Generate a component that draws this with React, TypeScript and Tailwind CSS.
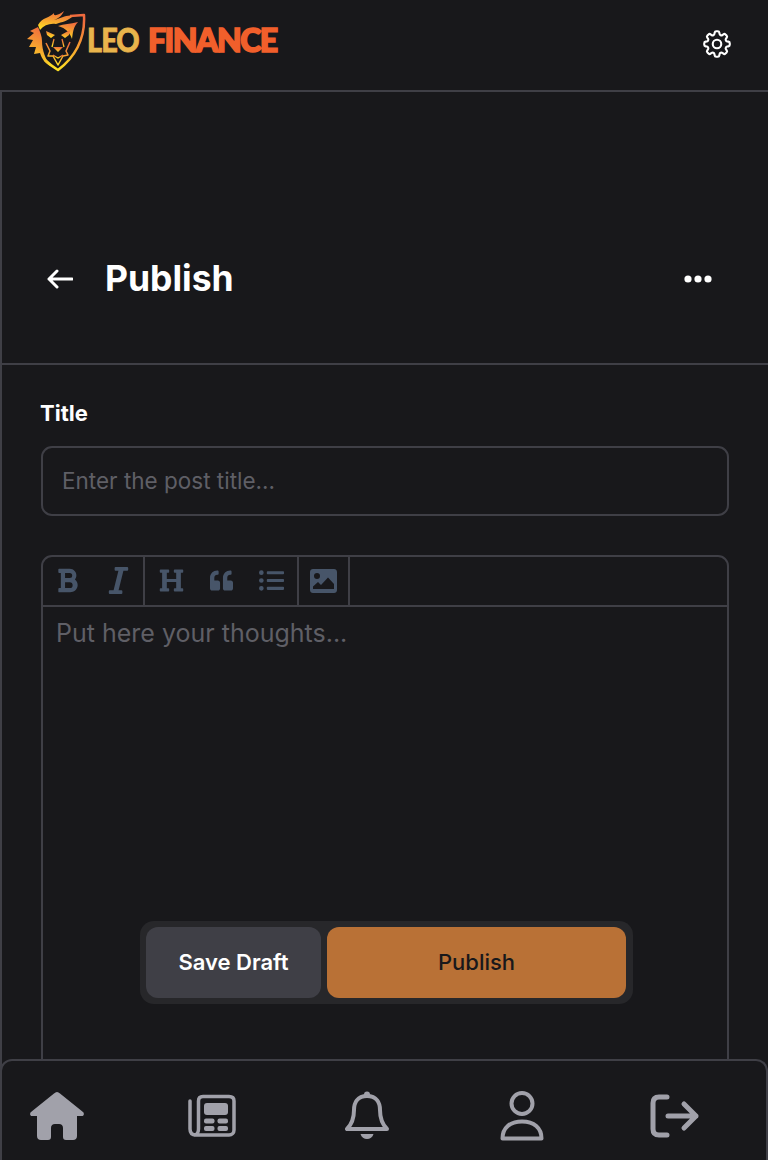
import { FaBold, FaItalic, FaHeading, FaQuoteLeft, FaListUl } from "react-icons/fa"
import { HiOutlineCog8Tooth } from "react-icons/hi2"

function LionLogo() {
  return (
    <svg width="60" height="64" viewBox="0 0 60 64" fill="none" className="shrink-0">
      <defs>
        <linearGradient id="lion" x1="0.6" y1="0" x2="0.35" y2="1">
          <stop offset="0" stopColor="#ef6a3e" />
          <stop offset="0.45" stopColor="#f59a32" />
          <stop offset="1" stopColor="#fde023" />
        </linearGradient>
      </defs>
      {/* shield */}
      <path d="M44 7 L58 6 C59 24 54 44 32 61 C27 58 23 55 19 51" stroke="url(#lion)" strokeWidth="2.500" strokeLinejoin="round" />
      {/* mane */}
      <path d="M12 16 C16 8 24 9 28 4 C27 8 33 6 38 2 C36 6 34 9 28 11 C35 9 42 5 47 7 C42 12 36 13 30 15 C24 14 18 16 14 21 Z" fill="url(#lion)" />
      <path d="M32 17 C38 15 44 15 52 13 C47 18 47 24 46 30 C44 24 40 19 32 17 Z" fill="url(#lion)" />
      <path d="M12 18 L4 22 L8 24 L1 30 L7 31 L3 38 L10 38 L8 45 L14 44 C16 50 19 54 24 57 C20 50 16 42 16 32 C16 27 14 23 12 18 Z" fill="url(#lion)" />
      {/* face */}
      <path d="M20 22 L29 26 L25 29 L21 26 Z M44 21 L35 26 L39 29 L43 26 Z" fill="url(#lion)" />
      <path d="M28 30 L26 38 M36 30 L38 38" stroke="url(#lion)" strokeWidth="1.300" />
      <path d="M27 38 H37 L32 43 Z" fill="url(#lion)" />
      <path d="M20 34 L24 42 L22 47 L27 47 L32 56 L37 47 L42 46 L40 42 L44 33" stroke="url(#lion)" strokeWidth="1.500" strokeLinejoin="round" />
      <path d="M27 46 L32 49 L37 46" stroke="url(#lion)" strokeWidth="1.300" />
    </svg>
  )
}

function ImageIcon() {
  return (
    <svg width="27" height="24" viewBox="0 0 27 24" className="text-[#475569]">
      <path
        fillRule="evenodd"
        fill="currentColor"
        d="M3 0 H24 C25.700 0 27 1.300 27 3 V21 C27 22.700 25.700 24 24 24 H3 C1.300 24 0 22.700 0 21 V3 C0 1.300 1.300 0 3 0 Z M7 4 A3 3 0 1 0 7 10 A3 3 0 1 0 7 4 Z M3 20 H24 V15 L18 8.500 L11 16 L8 13 L3 17.500 Z"
      />
    </svg>
  )
}

function HomeIcon() {
  return (
    <svg width="56" height="50" viewBox="0 0 56 50" fill="#a1a1aa">
      <path d="M28 1 C29 1 30 1.500 31 2.500 L54 21 C55.500 22.500 55 25 53 25 L48 25 L48 45 C48 47.500 46.500 49 44 49 L37 49 C35 49 34 48 34 46 L34 37 C34 34.500 32.500 33 30 33 L26 33 C23.500 33 22 34.500 22 37 L22 46 C22 48 21 49 19 49 L12 49 C9.500 49 8 47.500 8 45 L8 25 L3 25 C1 25 .500 22.500 2 21 L25 2.500 C26 1.500 27 1 28 1 Z" />
    </svg>
  )
}

function NewsIcon() {
  return (
    <svg width="50" height="44" viewBox="0 0 50 44" fill="none">
      <path d="M3 7 V35 C3 39 5 41 9 41 H42 C45 41 47 39 47 36 V7 C47 4 45 2.500 42 2.500 H16 C13 2.500 11.500 4 11.500 7 V35 C11.500 38.500 9.500 41 7 41" stroke="#a1a1aa" strokeWidth="3.500" strokeLinecap="round" />
      <rect x="17" y="9" width="24" height="12" rx="3" fill="#a1a1aa" />
      <rect x="17" y="24.500" width="10.500" height="5" rx="2" fill="#a1a1aa" />
      <rect x="30.500" y="24.500" width="10.500" height="5" rx="2" fill="#a1a1aa" />
      <rect x="17" y="32" width="10.500" height="5" rx="2" fill="#a1a1aa" />
      <rect x="30.500" y="32" width="10.500" height="5" rx="2" fill="#a1a1aa" />
    </svg>
  )
}

function BellIcon() {
  return (
    <svg width="44" height="50" viewBox="0 0 44 50" fill="none">
      <path d="M22 5 C12 5 9 12 9 19 C9 27 7 33 2 38 H42 C37 33 35 27 35 19 C35 12 32 5 22 5 Z" stroke="#a1a1aa" strokeWidth="4" strokeLinejoin="round" />
      <circle cx="22" cy="3.500" r="3" fill="#a1a1aa" />
      <path d="M15.500 43 H28.500 C27.500 46.500 25 48 22 48 C19 48 16.500 46.500 15.500 43 Z" fill="#a1a1aa" />
    </svg>
  )
}

function UserIcon() {
  return (
    <svg width="44" height="50" viewBox="0 0 44 50" fill="none">
      <circle cx="22" cy="12.500" r="10.500" stroke="#a1a1aa" strokeWidth="4" />
      <path d="M2.500 47.500 C2.500 37 10 30.500 22 30.500 C34 30.500 41.500 37 41.500 47.500 Z" stroke="#a1a1aa" strokeWidth="4" strokeLinejoin="round" />
    </svg>
  )
}

function LogoutIcon() {
  return (
    <svg width="50" height="44" viewBox="0 0 50 44" fill="none" stroke="#a1a1aa" strokeWidth="5" strokeLinecap="round" strokeLinejoin="round">
      <path d="M17 3 H9 C5 3 3 5 3 9 V35 C3 39 5 41 9 41 H17" />
      <path d="M18 22 H46 M34 10 L46 22 L34 34" />
    </svg>
  )
}

export default function App() {
  return (
    <div className="relative h-[1160px] overflow-hidden bg-[#18181b] font-['Inter',sans-serif] text-white">
      <header className="flex h-[92px] items-start justify-between border-b-2 border-[#3f3f46] pl-[26px] pr-[34px]">
        <div className="mt-[9px] flex items-center">
          <LionLogo />
          <span className="ml-[1px] mt-[-3px] inline-block w-[61px] origin-left scale-x-90 font-['Lato',sans-serif] text-[32px] font-black leading-none tracking-[-1px] text-[#e9b44c] [-webkit-text-stroke:0.800px_#e9b44c]">LEO</span>
          <span className="mt-[-3px] font-['Lato',sans-serif] text-[32px] font-black leading-none tracking-[-1.500px] text-[#f15f2b] [-webkit-text-stroke:1.600px_#f15f2b]">FINANCE</span>
        </div>
        <HiOutlineCog8Tooth className="mt-[27px] text-[34px] text-white" />
      </header>

      <div className="border-l-2 border-[#3f3f46]">
        <div className="flex h-[273px] items-end justify-between border-b-2 border-[#3f3f46] pb-[62px] pl-[45px] pr-[56px]">
          <div className="flex items-center">
            <svg width="26" height="20" viewBox="0 0 26 20" fill="none" stroke="white" strokeWidth="3" strokeLinecap="round" strokeLinejoin="round">
              <path d="M25 10 H2 M10 2 L2 10 L10 18" />
            </svg>
            <h1 className="ml-[32px] text-[35.500px] font-bold leading-[44px]">Publish</h1>
          </div>
          <svg width="28" height="8" viewBox="0 0 28 8" fill="white" className="mb-[18px]">
            <circle cx="4" cy="4" r="3.600" />
            <circle cx="14" cy="4" r="3.600" />
            <circle cx="24" cy="4" r="3.600" />
          </svg>
        </div>

        <div className="pl-[39px] pr-[39px]">
          <label className="mt-[34px] -ml-[1px] block text-[22px] font-bold leading-[28px]">Title</label>
          <div className="mt-[19px] flex h-[70px] items-center rounded-[11px] border-2 border-[#3f3f46] px-[19px] text-[22.500px] text-[#5f5f66]">
            Enter the post title...
          </div>

          <div className="mt-[39px] h-[560px] rounded-[11px] border-2 border-[#3f3f46]">
            <div className="flex h-[50px] border-b-2 border-[#3f3f46] text-[#475569]">
              <div className="flex w-[102px] items-center gap-[22px] border-r-2 border-[#3f3f46] pb-[1px] pl-[11px]">
                <FaBold className="text-[27px]" />
                <FaItalic className="text-[31px]" />
              </div>
              <div className="flex w-[154px] items-center gap-[26px] border-r-2 border-[#3f3f46] pb-[1px] pl-[14px]">
                <FaHeading className="text-[25px]" />
                <FaQuoteLeft className="text-[23px]" />
                <FaListUl className="text-[25px]" />
              </div>
              <div className="flex w-[51px] items-center justify-center border-r-2 border-[#3f3f46] pb-[1px]">
                <ImageIcon />
              </div>
            </div>
            <div className="px-[13px] py-[9px] text-[25px] leading-[34px] text-[#5f5f66]">
              Put here your thoughts...
            </div>
          </div>
        </div>
      </div>

      <div className="absolute left-[140px] top-[921px] flex h-[83px] w-[493px] gap-[6px] rounded-[14px] bg-[#27272a] p-[6px] pr-[7px] text-[22px] font-semibold">
        <button className="w-[175px] rounded-[12px] bg-[#3f3f46] text-white">Save Draft</button>
        <button className="flex-1 rounded-[12px] bg-[#b97136] font-medium text-[#18181b]">Publish</button>
      </div>

      <nav className="absolute bottom-0 left-0 right-0 flex h-[101px] items-center gap-[99px] rounded-t-[12px] border-2 border-b-0 border-[#3f3f46] bg-[#18181b] pl-[27px] pt-[10px]">
        <div className="flex w-[56px] justify-center"><HomeIcon /></div>
        <div className="flex w-[56px] justify-center"><NewsIcon /></div>
        <div className="flex w-[56px] justify-center"><BellIcon /></div>
        <div className="flex w-[56px] justify-center"><UserIcon /></div>
        <div className="-ml-[2px] flex w-[56px] justify-center"><LogoutIcon /></div>
      </nav>
    </div>
  )
}
